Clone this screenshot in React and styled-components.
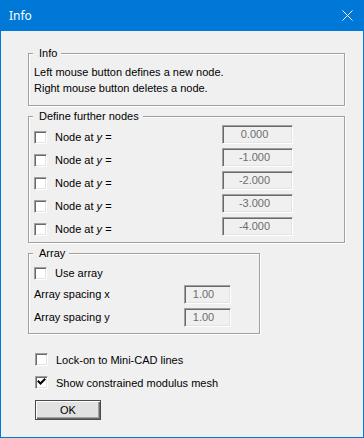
import React from "react";
import styled, { createGlobalStyle } from "styled-components";

const Global = createGlobalStyle`
  html, body { margin: 0; padding: 0; background: #f0f0f0; }
  body { font-family: "Liberation Sans", Arial, sans-serif; font-size: 11px; color: #000; }
`;

const Window = styled.div`
  width: 364px;
  height: 438px;
  box-sizing: border-box;
  border: 1px solid #0078d7;
  border-top: none;
  background: #f0f0f0;
  display: flex;
  flex-direction: column;
`;

const TitleBar = styled.div`
  height: 31px;
  flex: none;
  background: #0078d7;
  margin: 0 -1px;
  padding: 0 11px 0 9px;
  display: flex;
  align-items: center;
  justify-content: space-between;
  color: #fff;
  font-family: "Noto Sans", "Liberation Sans", sans-serif;
  font-size: 12px;
`;

const Body = styled.div`
  padding: 22px 18px 0 27px;
  display: flex;
  flex-direction: column;
`;

const Group = styled.div`
  position: relative;
  width: ${(p) => p.$w}px;
  box-sizing: border-box;
  border: 1px solid #a0a0a0;
  box-shadow: inset 1px 1px 0 #fff, 1px 1px 0 #fff;
  padding: ${(p) => p.$pad};
  margin-top: ${(p) => p.$mt || 0}px;
  display: flex;
  flex-direction: column;
`;

const Legend = styled.span`
  position: absolute;
  top: -7px;
  left: 4px;
  line-height: 13px;
  padding: 0 4px 0 6px;
  background: #f0f0f0;
`;

const TextLine = styled.div`
  line-height: 16px;
  white-space: nowrap;
`;

const Row = styled.div`
  height: 19px;
  display: flex;
  align-items: ${(p) => (p.$center ? "center" : "flex-start")};
  margin-top: ${(p) => p.$mt || 0}px;
`;

const CheckLabel = styled.div`
  width: ${(p) => p.$w || 188}px;
  height: 13px;
  margin-top: ${(p) => p.$mt ?? 6}px;
  display: flex;
  align-items: center;
  gap: 8px;
  white-space: nowrap;
  line-height: 13px;
`;

const Label = styled.div`
  width: ${(p) => p.$w}px;
  white-space: nowrap;
  line-height: 13px;
`;

const Box = styled.span`
  width: 13px;
  height: 13px;
  flex: none;
  box-sizing: border-box;
  background: #fff;
  border: 1px solid;
  border-color: #a0a0a0 #fff #fff #a0a0a0;
  box-shadow: inset 1px 1px 0 #696969, inset -1px -1px 0 #e3e3e3;
  display: flex;
  align-items: center;
  justify-content: center;
`;

const Field = styled.div`
  width: ${(p) => p.$w}px;
  height: 19px;
  box-sizing: border-box;
  border: 1px solid;
  border-color: #a0a0a0 #fff #fff #a0a0a0;
  box-shadow: inset 1px 1px 0 #696969, inset -1px -1px 0 #e3e3e3;
  background: #f0f0f0;
  color: #6d6d6d;
  display: flex;
  align-items: center;
  justify-content: center;
  padding-right: ${(p) => p.$pr || 6}px;
  line-height: 13px;
`;

const Standalone = styled.div`
  display: flex;
  align-items: center;
  gap: 8px;
  height: 13px;
  padding-left: 7px;
  margin-top: ${(p) => p.$mt}px;
  white-space: nowrap;
`;

const Button = styled.button`
  margin: 11px 0 0 7px;
  width: 66px;
  height: 20px;
  box-sizing: border-box;
  border: 1px solid #4a4a4a;
  background: #e1e1e1;
  box-shadow: inset 1px 1px 0 #fff, inset -1px -1px 0 #696969, inset -2px -2px 0 #a0a0a0;
  font-family: "Liberation Sans", Arial, sans-serif;
  font-size: 11px;
  color: #000;
  padding: 0;
  line-height: 13px;
`;

const Check = ({ checked }) => (
  <Box>
    {checked && (
      <svg width="9" height="9" viewBox="0 0 9 9">
        <path d="M1.5 3.5 L3.5 5.5 L7.5 1.5" stroke="#000" strokeWidth="2" fill="none" strokeLinecap="square" />
      </svg>
    )}
  </Box>
);

const nodes = ["0.000", "-1.000", "-2.000", "-3.000", "-4.000"];

export default function App() {
  return (
    <>
      <Global />
      <Window>
        <TitleBar>
          <span>Info</span>
          <svg width="11" height="11" viewBox="0 0 11 11">
            <path d="M0.5 0.5 L10.5 10.5 M10.5 0.5 L0.5 10.5" stroke="#fff" strokeWidth="1" />
          </svg>
        </TitleBar>
        <Body>
          <Group $w={317} $pad="10px 0 9px 5px">
            <Legend>Info</Legend>
            <TextLine>Left mouse button defines a new node.</TextLine>
            <TextLine>Right mouse button deletes a node.</TextLine>
          </Group>

          <Group $w={317} $mt={10} $pad="8px 0 6px 5px">
            <Legend>Define further nodes</Legend>
            {nodes.map((v, i) => (
              <Row key={v} $mt={i ? 4 : 0}>
                <CheckLabel>
                  <Check />
                  <span>
                    Node at <i>y</i> =
                  </span>
                </CheckLabel>
                <Field $w={71}>{v}</Field>
              </Row>
            ))}
          </Group>

          <Group $w={232} $mt={10} $pad="13px 0 6px 5px">
            <Legend>Array</Legend>
            <CheckLabel $mt={0}>
              <Check />
              <span>Use array</span>
            </CheckLabel>
            <Row $center $mt={5}>
              <Label $w={150}>Array spacing x</Label>
              <Field $w={47} $pr={8}>1.00</Field>
            </Row>
            <Row $center $mt={4}>
              <Label $w={150}>Array spacing y</Label>
              <Field $w={47} $pr={8}>1.00</Field>
            </Row>
          </Group>

          <Standalone $mt={19}>
            <Check />
            <span>Lock-on to Mini-CAD lines</span>
          </Standalone>
          <Standalone $mt={10}>
            <Check checked />
            <span>Show constrained modulus mesh</span>
          </Standalone>
          <div>
            <Button>OK</Button>
          </div>
        </Body>
      </Window>
    </>
  );
}
